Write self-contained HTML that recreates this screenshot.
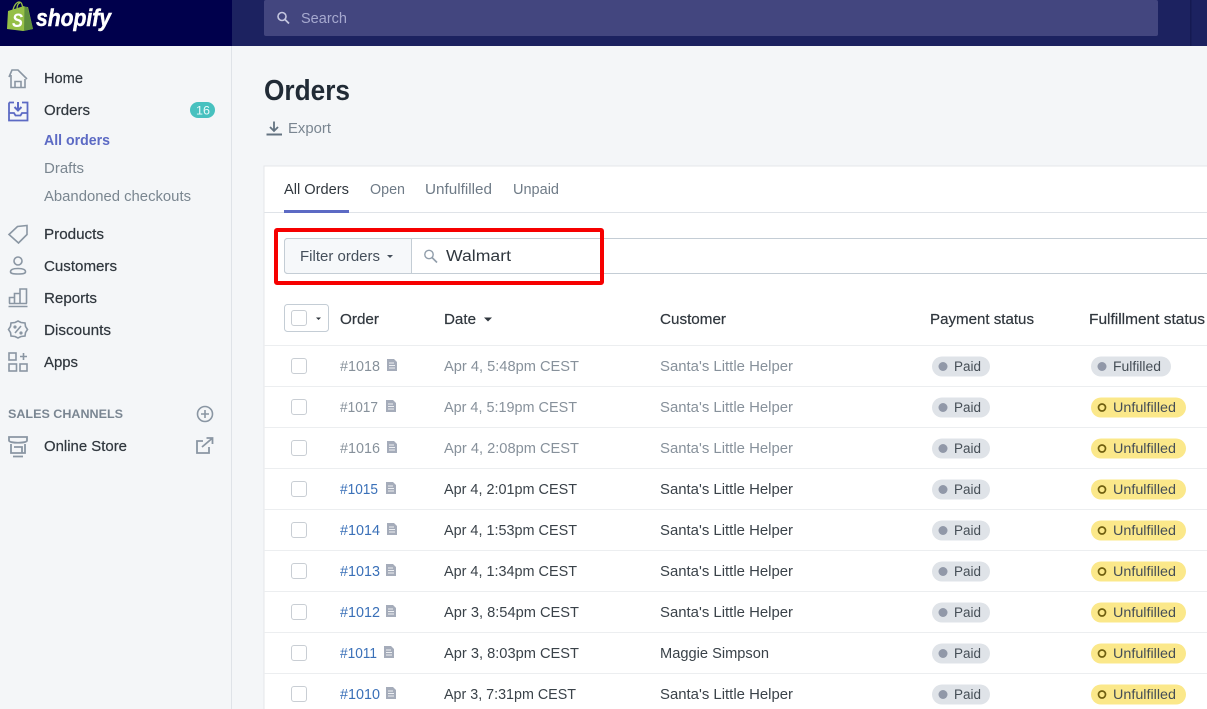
<!DOCTYPE html>
<html lang="en"><head><meta charset="utf-8"><title>Orders</title>
<style>
html,body{margin:0;padding:0;width:1207px;height:709px;overflow:hidden;background:#f4f6f8}
svg{display:block}
text{font-family:"Liberation Sans",sans-serif;font-size:14.5px}
.nav{fill:#30373e;stroke:#30373e;stroke-width:.2}.sub{fill:#7a8690}.act{fill:#5c6ac4;font-weight:bold}
.th{fill:#30373e;stroke:#30373e;stroke-width:.2}.gr{fill:#87919b}.lnk{fill:#3a70b8}.dk{fill:#3a4249}.st{fill:#454e56;font-size:13.5px}
.ic{fill:none;stroke:#8a96a3;stroke-width:1.6}
.cb{fill:#fff;stroke:#c9ced4;stroke-width:1}
.ln{stroke:#eceef0;stroke-width:1}
.bg{fill:#dfe3e8}.by{fill:#fbe88a}.dot{fill:#9198a8;r:4.5px}.ring{fill:none;stroke:#6f5f10;stroke-width:1.7}
.doc{fill:#a5acba}
</style></head><body>
<svg width="1207" height="709" viewBox="0 0 1207 709" xmlns="http://www.w3.org/2000/svg">
<defs>
<g id="doc"><path class="doc" d="M0 0h7l3 3v9H0z"/><path d="M2 4h5M2 6.500h6M2 9h6" stroke="#eef0f3" stroke-width="1"/></g>
</defs>
<!-- top bar -->
<rect width="1207" height="46" fill="#1c2260"/>
<rect width="232" height="46" fill="#00004c"/>
<rect x="264" y="0" width="894" height="36" rx="2" fill="#43467f"/>
<rect x="1190" y="0" width="1.500" height="46" fill="#151a52"/>
<circle cx="282" cy="16.500" r="4" fill="none" stroke="#c5c7e0" stroke-width="1.600"/>
<path d="M285 19.500l4 4" stroke="#c5c7e0" stroke-width="1.800"/>
<text x="301" y="23" textLength="46" lengthAdjust="spacingAndGlyphs" fill="#a6a9cf">Search</text>
<!-- logo -->
<path d="M8 11l16-5 1 1 3 0 5 22-10 2-16-2z" fill="#95bf47"/>
<path d="M24.500 6.500l3 .5 5.500 22-9 2z" fill="#5e8e3e"/>
<path d="M13 10c1-5 4-8 6-8 3 0 3 3 4 6M17 9c0-3 1-6 3-6" fill="none" stroke="#95bf47" stroke-width="1.300"/>
<text x="12" y="27" style="font-size:19px;font-weight:bold;font-style:italic" fill="#fff" textLength="11" lengthAdjust="spacingAndGlyphs">S</text>
<text x="36" y="26" style="font-size:24px;font-weight:bold;font-style:italic;stroke:#fff;stroke-width:.5" fill="#fff" textLength="75" lengthAdjust="spacingAndGlyphs">shopify</text>
<!-- sidebar -->
<rect x="231" y="46" width="1" height="663" fill="#dfe3e8"/>
<g class="ic">
<path d="M9 77l3-7h6l9 9M11 75v12.500h14V79M15 87.500v-6h6v6"/>
</g>
<path d="M9 102.500h5M22 102.500h5.500v18H9v-18M9 113h5l1.500 2.500h5l1.500-2.500h5.500" fill="none" stroke="#5c6ac4" stroke-width="1.800"/>
<path d="M18 102v8M14.500 107l3.500 3.500 3.500-3.500" fill="none" stroke="#5c6ac4" stroke-width="2"/>
<rect x="190" y="102" width="25" height="16" rx="8" fill="#47c1bf"/>
<text x="196" y="114.500" textLength="14" lengthAdjust="spacingAndGlyphs" fill="#eafafa" style="font-size:12px">16</text>
<text class="nav" x="44" y="83" textLength="39" lengthAdjust="spacingAndGlyphs">Home</text>
<text class="nav" x="44" y="115" textLength="46" lengthAdjust="spacingAndGlyphs">Orders</text>
<text class="act" x="44" y="145" textLength="66" lengthAdjust="spacingAndGlyphs">All orders</text>
<text class="sub" x="44" y="173" textLength="40" lengthAdjust="spacingAndGlyphs">Drafts</text>
<text class="sub" x="44" y="201" textLength="147" lengthAdjust="spacingAndGlyphs">Abandoned checkouts</text>
<text class="nav" x="44" y="239" textLength="60" lengthAdjust="spacingAndGlyphs">Products</text>
<text class="nav" x="44" y="271" textLength="73" lengthAdjust="spacingAndGlyphs">Customers</text>
<text class="nav" x="44" y="303" textLength="53" lengthAdjust="spacingAndGlyphs">Reports</text>
<text class="nav" x="44" y="335" textLength="67" lengthAdjust="spacingAndGlyphs">Discounts</text>
<text class="nav" x="44" y="367" textLength="34" lengthAdjust="spacingAndGlyphs">Apps</text>
<text x="8" y="418" textLength="115" lengthAdjust="spacingAndGlyphs" fill="#7a8692" style="font-size:12px;font-weight:bold">SALES CHANNELS</text>
<text class="nav" x="44" y="451" textLength="83" lengthAdjust="spacingAndGlyphs">Online Store</text>
<g class="ic">
<path d="M9 234.500l8.500-8 9.500-1v9l-8.500 8.500z"/>
<circle cx="18" cy="261" r="4"/><path d="M18 268.500c-5 0-7.500 1-7.500 3.200 0 1.800 2 2.300 7.500 2.300s7.500-.5 7.500-2.300c0-2.200-2.500-3.200-7.500-3.200z"/>
<path d="M8.500 306.500h19M9.500 303.500v-6h5v6M14.500 303.500v-10h5.500v10M20 303.500V289h6.500v14.500M9 303.500h18"/>
<path d="M18 321l3 1.500 4 .5.500 3.500 2 3-2 3-.5 3.500-4 .5-3 1.500-3-1.500-4-.5-.5-3.500-2-3 2-3 .5-3.500 4-.5z"/>
<path d="M15 333l6-7"/><circle cx="15" cy="327" r=".8"/><circle cx="21" cy="333" r=".8"/>
<rect x="9" y="353" width="7" height="7"/><rect x="9" y="364" width="7.500" height="7"/><rect x="20" y="364" width="7" height="7"/><path d="M23.500 353v7M20 356.500h7"/>
<circle cx="205" cy="414" r="7.500"/><path d="M205 410v8M201 414h8"/>
<path d="M9 437h18v3.500c0 3-18 3-18 0zM11 444v9h14v-9M14 447h8v6h-8M13 456.500h10" stroke-width="1.800"/>
<path d="M203 441h-6v12h12v-6M202 447l10-8.500M206.500 438h6v6" stroke-width="1.800"/>
</g>
<!-- page header -->
<text x="264" y="100" textLength="86" lengthAdjust="spacingAndGlyphs" fill="#212b36" style="font-size:29px;font-weight:bold">Orders</text>
<path d="M266.500 134.500h15.500" stroke="#637381" stroke-width="2"/>
<path d="M274 121.500v9M270 127l4 4 4-4" fill="none" stroke="#637381" stroke-width="1.800"/>
<text x="288" y="133" textLength="43" lengthAdjust="spacingAndGlyphs" fill="#7a8691">Export</text>
<!-- card -->
<rect x="264" y="166" width="960" height="560" fill="#fff" stroke="#e4e7ea" stroke-width="1"/>
<rect x="264.500" y="212" width="943" height="1" fill="#dfe3e8"/>
<rect x="284" y="210" width="65" height="3" fill="#5c6ac4"/>
<text x="284" y="194" textLength="65" lengthAdjust="spacingAndGlyphs" fill="#30373e">All Orders</text>
<text x="370" y="194" textLength="35" lengthAdjust="spacingAndGlyphs" fill="#6f7b87">Open</text>
<text x="425" y="194" textLength="67" lengthAdjust="spacingAndGlyphs" fill="#6f7b87">Unfulfilled</text>
<text x="513" y="194" textLength="46" lengthAdjust="spacingAndGlyphs" fill="#6f7b87">Unpaid</text>
<!-- filter -->
<rect x="284.500" y="238.500" width="940" height="35" rx="3" fill="#fff" stroke="#c4cdd5"/>
<path d="M411.500 238.500H287.500a3 3 0 0 0-3 3v29a3 3 0 0 0 3 3h124z" fill="#f6f8fa" stroke="#c4cdd5"/>
<text x="300" y="261" textLength="80" lengthAdjust="spacingAndGlyphs" fill="#454f5b">Filter orders</text>
<path d="M387 255h6l-3 3z" fill="#454f5b"/>
<circle cx="429" cy="254.500" r="4.200" fill="none" stroke="#919eab" stroke-width="1.400"/>
<path d="M432 257.500l5 5" stroke="#919eab" stroke-width="1.600"/>
<text x="446" y="261" textLength="65" lengthAdjust="spacingAndGlyphs" fill="#30373e" style="font-size:15.500px">Walmart</text>
<rect x="276" y="230" width="326" height="53" rx="1" fill="none" stroke="#f60000" stroke-width="4"/>
<!-- table header -->
<rect x="284.500" y="304.500" width="44" height="27" rx="3" fill="#fff" stroke="#c4cdd5"/>
<rect x="291.500" y="310.500" width="15" height="15" rx="2.500" class="cb"/>
<path d="M316 317.500h5l-2.500 2.500z" fill="#30373e"/>
<text class="th" x="340" y="324" textLength="39" lengthAdjust="spacingAndGlyphs">Order</text>
<text class="th" x="444" y="324" textLength="32" lengthAdjust="spacingAndGlyphs">Date</text>
<path d="M484 317.500h8l-4 4z" fill="#30373e"/>
<text class="th" x="660" y="324" textLength="66" lengthAdjust="spacingAndGlyphs">Customer</text>
<text class="th" x="930" y="324" textLength="104" lengthAdjust="spacingAndGlyphs">Payment status</text>
<text class="th" x="1089" y="324" textLength="116" lengthAdjust="spacingAndGlyphs">Fulfillment status</text>
<!-- row lines -->
<path class="ln" d="M264 345.500H1207M264 386.500H1207M264 427.500H1207M264 468.500H1207M264 509.500H1207M264 550.500H1207M264 591.500H1207M264 632.500H1207M264 673.500H1207"/>
<!-- row 1018 -->
<rect x="291.500" y="358.500" width="15" height="15" rx="2.500" class="cb"/>
<text class="gr" x="340" y="371" textLength="40" lengthAdjust="spacingAndGlyphs">#1018</text><use href="#doc" x="387" y="359"/>
<text class="gr" x="444" y="371" textLength="135" lengthAdjust="spacingAndGlyphs">Apr 4, 5:48pm CEST</text>
<text class="gr" x="660" y="371" textLength="133" lengthAdjust="spacingAndGlyphs">Santa's Little Helper</text>
<rect class="bg" x="932" y="356.500" width="58" height="20" rx="10"/><circle class="dot" cx="943" cy="366.500" r="4"/><text class="st" x="954" y="371" textLength="27" lengthAdjust="spacingAndGlyphs">Paid</text>
<rect class="bg" x="1091" y="356.500" width="80" height="20" rx="10"/><circle class="dot" cx="1102" cy="366.500" r="4"/><text class="st" x="1113" y="371" textLength="48" lengthAdjust="spacingAndGlyphs">Fulfilled</text>
<!-- row 1017 -->
<rect x="291.500" y="399.500" width="15" height="15" rx="2.500" class="cb"/>
<text class="gr" x="340" y="412" textLength="38" lengthAdjust="spacingAndGlyphs">#1017</text><use href="#doc" x="386" y="400"/>
<text class="gr" x="444" y="412" textLength="133" lengthAdjust="spacingAndGlyphs">Apr 4, 5:19pm CEST</text>
<text class="gr" x="660" y="412" textLength="133" lengthAdjust="spacingAndGlyphs">Santa's Little Helper</text>
<rect class="bg" x="932" y="397.500" width="58" height="20" rx="10"/><circle class="dot" cx="943" cy="407.500" r="4"/><text class="st" x="954" y="412" textLength="27" lengthAdjust="spacingAndGlyphs">Paid</text>
<rect class="by" x="1091" y="397.500" width="95" height="20" rx="10"/><circle class="ring" cx="1102" cy="407.500" r="3.500"/><text class="st" x="1113" y="412" textLength="63" lengthAdjust="spacingAndGlyphs">Unfulfilled</text>
<!-- row 1016 -->
<rect x="291.500" y="440.500" width="15" height="15" rx="2.500" class="cb"/>
<text class="gr" x="340" y="453" textLength="40" lengthAdjust="spacingAndGlyphs">#1016</text><use href="#doc" x="387" y="441"/>
<text class="gr" x="444" y="453" textLength="135" lengthAdjust="spacingAndGlyphs">Apr 4, 2:08pm CEST</text>
<text class="gr" x="660" y="453" textLength="133" lengthAdjust="spacingAndGlyphs">Santa's Little Helper</text>
<rect class="bg" x="932" y="438.500" width="58" height="20" rx="10"/><circle class="dot" cx="943" cy="448.500" r="4"/><text class="st" x="954" y="453" textLength="27" lengthAdjust="spacingAndGlyphs">Paid</text>
<rect class="by" x="1091" y="438.500" width="95" height="20" rx="10"/><circle class="ring" cx="1102" cy="448.500" r="3.500"/><text class="st" x="1113" y="453" textLength="63" lengthAdjust="spacingAndGlyphs">Unfulfilled</text>
<!-- row 1015 -->
<rect x="291.500" y="481.500" width="15" height="15" rx="2.500" class="cb"/>
<text class="lnk" x="340" y="494" textLength="38" lengthAdjust="spacingAndGlyphs">#1015</text><use href="#doc" x="386" y="482"/>
<text class="dk" x="444" y="494" textLength="133" lengthAdjust="spacingAndGlyphs">Apr 4, 2:01pm CEST</text>
<text class="dk" x="660" y="494" textLength="133" lengthAdjust="spacingAndGlyphs">Santa's Little Helper</text>
<rect class="bg" x="932" y="479.500" width="58" height="20" rx="10"/><circle class="dot" cx="943" cy="489.500" r="4"/><text class="st" x="954" y="494" textLength="27" lengthAdjust="spacingAndGlyphs">Paid</text>
<rect class="by" x="1091" y="479.500" width="95" height="20" rx="10"/><circle class="ring" cx="1102" cy="489.500" r="3.500"/><text class="st" x="1113" y="494" textLength="63" lengthAdjust="spacingAndGlyphs">Unfulfilled</text>
<!-- row 1014 -->
<rect x="291.500" y="522.500" width="15" height="15" rx="2.500" class="cb"/>
<text class="lnk" x="340" y="535" textLength="40" lengthAdjust="spacingAndGlyphs">#1014</text><use href="#doc" x="387" y="523"/>
<text class="dk" x="444" y="535" textLength="133" lengthAdjust="spacingAndGlyphs">Apr 4, 1:53pm CEST</text>
<text class="dk" x="660" y="535" textLength="133" lengthAdjust="spacingAndGlyphs">Santa's Little Helper</text>
<rect class="bg" x="932" y="520.500" width="58" height="20" rx="10"/><circle class="dot" cx="943" cy="530.500" r="4"/><text class="st" x="954" y="535" textLength="27" lengthAdjust="spacingAndGlyphs">Paid</text>
<rect class="by" x="1091" y="520.500" width="95" height="20" rx="10"/><circle class="ring" cx="1102" cy="530.500" r="3.500"/><text class="st" x="1113" y="535" textLength="63" lengthAdjust="spacingAndGlyphs">Unfulfilled</text>
<!-- row 1013 -->
<rect x="291.500" y="563.500" width="15" height="15" rx="2.500" class="cb"/>
<text class="lnk" x="340" y="576" textLength="40" lengthAdjust="spacingAndGlyphs">#1013</text><use href="#doc" x="386" y="564"/>
<text class="dk" x="444" y="576" textLength="133" lengthAdjust="spacingAndGlyphs">Apr 4, 1:34pm CEST</text>
<text class="dk" x="660" y="576" textLength="133" lengthAdjust="spacingAndGlyphs">Santa's Little Helper</text>
<rect class="bg" x="932" y="561.500" width="58" height="20" rx="10"/><circle class="dot" cx="943" cy="571.500" r="4"/><text class="st" x="954" y="576" textLength="27" lengthAdjust="spacingAndGlyphs">Paid</text>
<rect class="by" x="1091" y="561.500" width="95" height="20" rx="10"/><circle class="ring" cx="1102" cy="571.500" r="3.500"/><text class="st" x="1113" y="576" textLength="63" lengthAdjust="spacingAndGlyphs">Unfulfilled</text>
<!-- row 1012 -->
<rect x="291.500" y="604.500" width="15" height="15" rx="2.500" class="cb"/>
<text class="lnk" x="340" y="617" textLength="40" lengthAdjust="spacingAndGlyphs">#1012</text><use href="#doc" x="386" y="605"/>
<text class="dk" x="444" y="617" textLength="135" lengthAdjust="spacingAndGlyphs">Apr 3, 8:54pm CEST</text>
<text class="dk" x="660" y="617" textLength="133" lengthAdjust="spacingAndGlyphs">Santa's Little Helper</text>
<rect class="bg" x="932" y="602.500" width="58" height="20" rx="10"/><circle class="dot" cx="943" cy="612.500" r="4"/><text class="st" x="954" y="617" textLength="27" lengthAdjust="spacingAndGlyphs">Paid</text>
<rect class="by" x="1091" y="602.500" width="95" height="20" rx="10"/><circle class="ring" cx="1102" cy="612.500" r="3.500"/><text class="st" x="1113" y="617" textLength="63" lengthAdjust="spacingAndGlyphs">Unfulfilled</text>
<!-- row 1011 -->
<rect x="291.500" y="645.500" width="15" height="15" rx="2.500" class="cb"/>
<text class="lnk" x="340" y="658" textLength="37" lengthAdjust="spacingAndGlyphs">#1011</text><use href="#doc" x="384" y="646"/>
<text class="dk" x="444" y="658" textLength="135" lengthAdjust="spacingAndGlyphs">Apr 3, 8:03pm CEST</text>
<text class="dk" x="660" y="658" textLength="109" lengthAdjust="spacingAndGlyphs">Maggie Simpson</text>
<rect class="bg" x="932" y="643.500" width="58" height="20" rx="10"/><circle class="dot" cx="943" cy="653.500" r="4"/><text class="st" x="954" y="658" textLength="27" lengthAdjust="spacingAndGlyphs">Paid</text>
<rect class="by" x="1091" y="643.500" width="95" height="20" rx="10"/><circle class="ring" cx="1102" cy="653.500" r="3.500"/><text class="st" x="1113" y="658" textLength="63" lengthAdjust="spacingAndGlyphs">Unfulfilled</text>
<!-- row 1010 -->
<rect x="291.500" y="686.500" width="15" height="15" rx="2.500" class="cb"/>
<text class="lnk" x="340" y="699" textLength="40" lengthAdjust="spacingAndGlyphs">#1010</text><use href="#doc" x="386" y="687"/>
<text class="dk" x="444" y="699" textLength="132" lengthAdjust="spacingAndGlyphs">Apr 3, 7:31pm CEST</text>
<text class="dk" x="660" y="699" textLength="133" lengthAdjust="spacingAndGlyphs">Santa's Little Helper</text>
<rect class="bg" x="932" y="684.500" width="58" height="20" rx="10"/><circle class="dot" cx="943" cy="694.500" r="4"/><text class="st" x="954" y="699" textLength="27" lengthAdjust="spacingAndGlyphs">Paid</text>
<rect class="by" x="1091" y="684.500" width="95" height="20" rx="10"/><circle class="ring" cx="1102" cy="694.500" r="3.500"/><text class="st" x="1113" y="699" textLength="63" lengthAdjust="spacingAndGlyphs">Unfulfilled</text>
</svg>
</body></html>
